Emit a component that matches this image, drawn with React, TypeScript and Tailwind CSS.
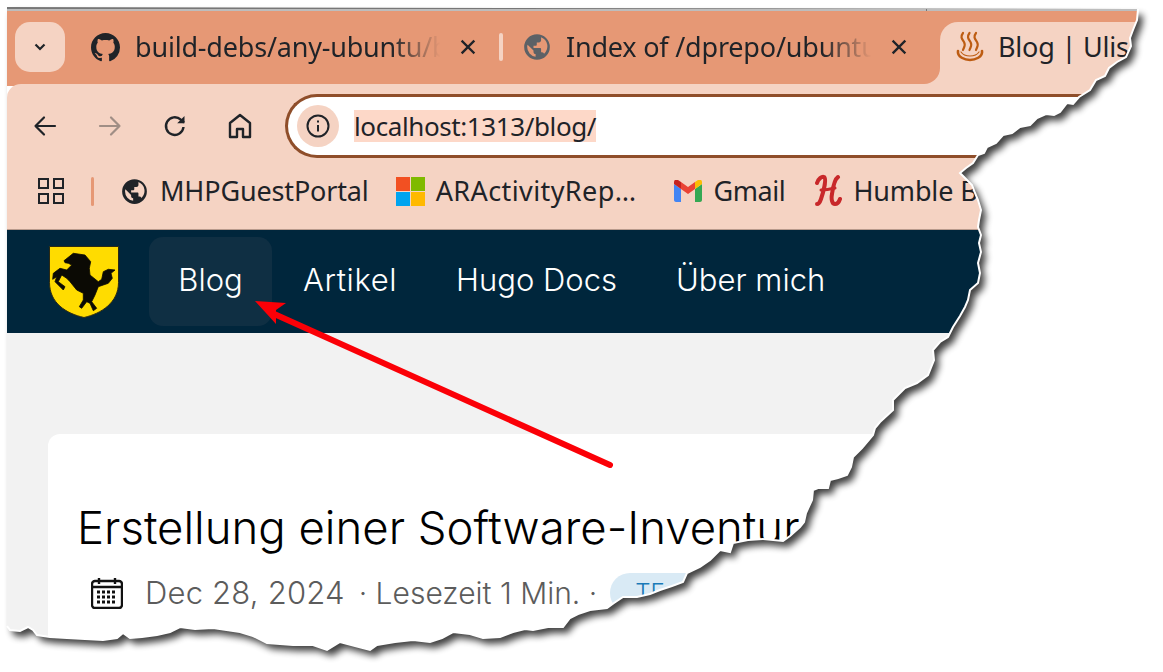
const edge =
  "1138,9 1137,20 1133,30 1130,38 1131,46 1126,57 1117,62 1109,68 1105,76 1096,80 1090,90 1079,97 1073,104 1067,103 1060,112 1054,115 1046,114 1037,118 1030,125 1020,127 1012,133 1003,135 996,143 987,147 984,153 978,155 973,163 966,168 960,173 965,178 972,185 975,193 978,200 981,210 979,220 978,227 981,235 979,243 981,252 978,263 980,273 978,283 970,290 968,300 965,307 960,316 953,327 948,337 940,342 933,350 934,360 928,375 917,383 905,388 900,393 893,400 893,410 880,422 875,428 873,435 862,448 853,457 851,467 847,475 838,478 830,480 828,488 818,488 813,490 812,500 806,513 804,522 800,527 790,536 783,541 763,539 748,540 733,543 730,552 725,551 720,550 710,560 700,567 687,573 683,582 672,586 660,590 650,594 637,597 623,597 614,603 607,608 590,610 578,614 570,618 563,627 548,627 533,630 525,629 513,632 500,637 483,638 470,634 453,632 442,638 430,642 413,640 395,642 377,645 370,650 355,646 340,642 327,650 313,645 293,645 267,643 253,636 240,632 213,628 195,629 180,627 170,632 157,635 142,637 130,638 123,633 117,638 103,640 85,639 67,638 50,637 37,635 33,630 28,627 20,631 10,630 7,626";
const pagePoints = `7,7 ${edge}`;
const outsidePath = `M0,0 H1163 V672 H0 Z M${pagePoints.replace(/ /g, " L")} Z`;

function GithubMark() {
  return (
    <svg viewBox="0 0 16 16" className="h-[29px] w-[29px] shrink-0" fill="#1f2328">
      <path d="M8 0C3.58 0 0 3.58 0 8c0 3.54 2.29 6.53 5.47 7.59.4.07.55-.17.55-.38 0-.19-.01-.82-.01-1.49-2.01.37-2.53-.49-2.69-.94-.09-.23-.48-.94-.82-1.13-.28-.15-.68-.52-.01-.53.63-.01 1.08.58 1.23.82.72 1.21 1.87.87 2.33.66.07-.52.28-.87.51-1.07-1.78-.2-3.64-.89-3.64-3.95 0-.87.31-1.59.82-2.15-.08-.2-.36-1.02.08-2.12 0 0 .67-.21 2.2.82.64-.18 1.32-.27 2-.27s1.36.09 2 .27c1.53-1.04 2.2-.82 2.2-.82.44 1.1.16 1.92.08 2.12.51.56.82 1.27.82 2.15 0 3.07-1.87 3.75-3.65 3.95.29.25.54.73.54 1.48 0 1.07-.01 1.93-.01 2.2 0 .21.15.46.55.38A8.01 8.01 0 0 0 16 8c0-4.42-3.58-8-8-8z" />
    </svg>
  );
}

function Globe({ color, size }: { color: string; size: string }) {
  return (
    <svg viewBox="0 0 24 24" className={size} fill={color}>
      <path d="M12 1a11 11 0 1 0 0 22 11 11 0 0 0 0-22zM3.600 12c0-.7.1-1.400.3-2l5.100 5.100v1.100c0 1 .8 1.800 1.800 1.800v2.300A8.400 8.400 0 0 1 3.600 12zm14.500 5.700a1.900 1.900 0 0 0-1.700-1.200h-.9v-2.800c0-.5-.4-.9-.9-.9H9v-1.900h1.900c.5 0 .9-.4.9-.9V8.100h1.900c1 0 1.800-.8 1.800-1.800V3.600a8.400 8.400 0 0 1 2.600 14.100z" />
    </svg>
  );
}

function CloseIcon() {
  return (
    <svg viewBox="0 0 16 16" className="h-4 w-4 shrink-0" stroke="#1f2328" strokeWidth="2.400" strokeLinecap="square">
      <path d="M2.500 2.500l11 11M13.500 2.500l-11 11" />
    </svg>
  );
}

function SteamIcon() {
  return (
    <svg viewBox="0 0 30 32" className="h-[32px] w-[30px] shrink-0" fill="none" stroke="#bd5c12" strokeWidth="2.200" strokeLinecap="round">
      <path d="M8 2C5 6 7 8 9 11c2 3 0 5-1 8M14.500 2c-3 4-1 6 1 9s0 5-1 8M21 2c-3 4-1 6 1 9s0 5-1 8" />
      <path d="M3 20c-1 6 7 9 12 9s13-3 12-9" strokeWidth="2.600" />
      <path d="M6 21c2 3 5 4 9 4s7-1 9-4" strokeWidth="1.200" />
    </svg>
  );
}

function Shield() {
  return (
    <svg viewBox="0 0 70 72" className="h-[72px] w-[70px] shrink-0">
      <path d="M.5.5h69v36c0 20-17 31-34.500 35C17 67.500.5 57 .5 36.500z" fill="#ffdc00" stroke="#2d2a12" />
      <path
        d="M15 14.700 24.300 7.300 36 9l5.700 6.700-1.400 6.600.7 6.700 8.300 6.700 3.400-2.400 1.600-7.600 5-2.400 6.700.7-4 3.300 1.300 5-4 5-5 1.700-5 1.700L46 49l-3.300 6.700 5 6.600-3.400 2.400-3.300-7.400-3.300-1.600-5 6.600-2.400-1.600 4-6.700v-6.700L27.700 44 21 35.700l-3.300-3.400-5-3.300-3.400 6.700 6.700 5-1.700 3.300L6 35.700l1.700-5-4 2.600.6-6 6.700-5 6.700 1.700 5-5-3.400-1.700-3.300-.6z"
        fill="#0b0a04"
        stroke="#0b0a04"
        strokeWidth="0.800"
        strokeLinejoin="round"
      />
    </svg>
  );
}

function Gmail() {
  return (
    <svg viewBox="0 0 28 22" className="h-[22px] w-[28px] shrink-0">
      <path d="M2 22h5V9L0 4v16c0 1 1 2 2 2z" fill="#4285f4" />
      <path d="M21 22h5c1 0 2-1 2-2V4l-7 5z" fill="#34a853" />
      <path d="M21 2v7l7-5V2c0-2-2-3-4-2z" fill="#fbbc04" />
      <path d="M7 9V2l7 5 7-5v7l-7 5z" fill="#ea4335" />
      <path d="M0 2v2l7 5V2L4 0C2-1 0 0 0 2z" fill="#c5221f" />
    </svg>
  );
}

function HumbleLogo() {
  return (
    <svg viewBox="0 0 28 34" className="h-[34px] w-[28px] shrink-0" fill="none" stroke="#c8282a" strokeWidth="4" strokeLinecap="round">
      <path d="M3 9c1-4 5-7 7-6 3 2-1 16-3 22-1 3-2 5-4 5" />
      <path d="M7 16c5 0 10-1 14-2" strokeWidth="3" />
      <path d="M24 3c-3 2-5 10-6 17-1 5 0 10 3 10 2 0 4-2 5-5" />
    </svg>
  );
}

export default function App() {
  return (
    <div className="relative h-[672px] w-[1163px] overflow-hidden bg-white font-['Noto_Sans',sans-serif]">
      <div className="flex h-full flex-col pl-[7px] pt-[7px]">
        <div className="h-[2px] shrink-0 bg-[#777777]" />
        <div className="h-[2px] shrink-0 bg-[#bdbdbd]">
          <div className="ml-[919px] h-full w-px bg-[#777777]" />
        </div>

        {/* tab strip */}
        <div className="flex h-[75px] shrink-0 items-start bg-[#e69875] pl-2 pt-[11px] text-[27px] leading-[50px] tracking-[-0.2px] text-[#1f2328]">
          <div className="flex h-[50px] w-[50px] shrink-0 items-center justify-center rounded-[15px] bg-[#f5d3c3]">
            <svg viewBox="0 0 16 16" className="h-4 w-4" fill="none" stroke="#1f2328" strokeWidth="2.200">
              <path d="M3.500 5.500 8 10l4.500-4.500" />
            </svg>
          </div>
          <div className="ml-[26px] flex h-[50px] w-[408px] shrink-0 items-center">
            <GithubMark />
            <span className="ml-[15px] w-[305px] shrink-0 overflow-hidden whitespace-nowrap [mask-image:linear-gradient(90deg,#000_84%,transparent)]">
              build-debs/any-ubuntu/b
            </span>
            <span className="ml-5"><CloseIcon /></span>
          </div>
          <div className="mt-[11px] h-[28px] w-1 shrink-0 rounded-sm bg-[#f5d3c3]" />
          <div className="ml-[20px] flex h-[50px] w-[401px] shrink-0 items-center">
            <Globe color="#5c6166" size="h-[28px] w-[28px] shrink-0" />
            <span className="ml-[15px] w-[305px] shrink-0 overflow-hidden whitespace-nowrap [mask-image:linear-gradient(90deg,#000_84%,transparent)]">
              Index of /dprepo/ubuntu
            </span>
            <span className="ml-5"><CloseIcon /></span>
          </div>
          <div className="h-[64px] w-4 shrink-0 bg-[#f5d3c3]">
            <div className="h-[62px] w-4 rounded-br-[16px] bg-[#e69875]" />
          </div>
          <div className="flex h-[64px] flex-1 items-start rounded-tl-[18px] bg-[#f5d3c3] pl-[15px]">
            <div className="flex h-[50px] items-center">
              <SteamIcon />
              <span className="ml-[13px] whitespace-nowrap">Blog | Ulis W</span>
            </div>
          </div>
        </div>

        {/* toolbar */}
        <div className="-mt-[2px] flex h-[83px] shrink-0 items-center rounded-tl-[14px] bg-[#f5d3c3] pl-[26px]">
          <svg viewBox="0 0 24 24" className="h-[24px] w-[24px] shrink-0" fill="none" stroke="#1f2328" strokeWidth="2.200" strokeLinecap="round" strokeLinejoin="round">
            <path d="M22 12H2.500M11 3.500 2.500 12l8.500 8.500" />
          </svg>
          <svg viewBox="0 0 24 24" className="ml-[41px] h-[24px] w-[24px] shrink-0" fill="none" stroke="#a08e85" strokeWidth="2.200" strokeLinecap="round" strokeLinejoin="round">
            <path d="M2 12h19.500M13 3.500l8.500 8.500-8.500 8.500" />
          </svg>
          <svg viewBox="0 0 24 24" className="ml-[41px] h-[24px] w-[24px] shrink-0" fill="none" stroke="#1f2328" strokeWidth="2.400">
            <path d="M20.500 13a8.800 8.800 0 1 1-2.700-7.300L21 8.500" />
            <path d="M21.500 2v7.300h-7.300" fill="#1f2328" stroke="none" />
          </svg>
          <svg viewBox="0 0 24 26" className="ml-[41px] h-[26px] w-[24px] shrink-0" fill="none" stroke="#1f2328" strokeWidth="2.400" strokeLinejoin="round">
            <path d="M2 24V10l10-8 10 8v14h-7v-8H9v8z" />
          </svg>
          <div className="ml-[33px] flex h-[64px] flex-1 items-center rounded-l-[32px] border-y-[3px] border-l-[3px] border-[#8f4e2a] bg-white pl-[9px]">
            <div className="flex h-[42px] w-[42px] shrink-0 items-center justify-center rounded-full bg-[#f5d3c3]">
              <svg viewBox="0 0 24 24" className="h-[24px] w-[24px]" fill="none" stroke="#1f2328" strokeWidth="2">
                <circle cx="12" cy="12" r="10.500" />
                <path d="M12 11v6.500M12 6.500v2" />
              </svg>
            </div>
            <span className="ml-[15px] bg-[#fdd8c8] text-[26px] leading-[32px] tracking-[-0.4px] text-[#1f2328]">localhost:1313/blog/</span>
          </div>
        </div>

        {/* bookmarks */}
        <div className="flex h-[63px] shrink-0 items-center whitespace-nowrap border-b border-[#b89a8c] bg-[#f5d3c3] pb-[14px] pl-[31px] text-[27px] tracking-[-0.15px] text-[#1f2328]">
          <div className="grid h-[26px] w-[26px] shrink-0 grid-cols-2 gap-[4px]">
            <span className="border-[2.500px] border-[#1f2328]" />
            <span className="border-[2.500px] border-[#1f2328]" />
            <span className="border-[2.500px] border-[#1f2328]" />
            <span className="border-[2.500px] border-[#1f2328]" />
          </div>
          <div className="ml-[27px] h-[29px] w-[3px] shrink-0 rounded-sm bg-[#e69875]" />
          <span className="ml-[27px]"><Globe color="#1f2328" size="h-[27px] w-[27px]" /></span>
          <span className="ml-[12px]">MHPGuestPortal</span>
          <div className="ml-[27px] grid h-[29px] w-[29px] shrink-0 grid-cols-2 gap-[1px]">
            <span className="bg-[#f25022]" />
            <span className="bg-[#7fba00]" />
            <span className="bg-[#00a4ef]" />
            <span className="bg-[#ffb900]" />
          </div>
          <span className="ml-[11px] tracking-[0.4px]">ARActivityRep…</span>
          <span className="ml-[38px]"><Gmail /></span>
          <span className="ml-[11px] tracking-[-0.4px]">Gmail</span>
          <span className="ml-[29px]"><HumbleLogo /></span>
          <span className="ml-[11px]">Humble B</span>
        </div>

        {/* site nav */}
        <nav className="flex h-[103px] shrink-0 items-start bg-[#00263c] pl-[42px] pt-4 font-['Inter',sans-serif] text-[31px] font-light leading-[86px] text-white">
          <Shield />
          <span className="-mt-[9px] ml-[30px] h-[89px] w-[123px] rounded-[14px] bg-[#0f2f43] text-center">Blog</span>
          <span className="-mt-[9px] ml-[31px] tracking-[0.6px]">Artikel</span>
          <span className="-mt-[9px] ml-[59px]">Hugo Docs</span>
          <span className="-mt-[9px] ml-[59px]">Über mich</span>
        </nav>

        {/* content */}
        <main className="min-h-0 flex-1 bg-[#f2f2f2] pl-[41px] pt-[101px] font-['Inter',sans-serif]">
          <article className="h-[300px] rounded-tl-[12px] bg-white pl-[29px] pt-[64px]">
            <h1 className="whitespace-nowrap text-[45.500px] font-light leading-[60px] text-black">Erstellung einer Software-Inventur</h1>
            <div className="mt-[15px] flex items-center whitespace-nowrap pl-[14px] text-[30px] font-light leading-[40px] text-[#5c5c5c]">
              <svg viewBox="0 0 32 32" className="h-[32px] w-[32px] shrink-0" fill="none" stroke="#111111" strokeWidth="2.400">
                <path d="M4 4h24a3 3 0 0 1 3 3v21a3 3 0 0 1-3 3H4a3 3 0 0 1-3-3V7a3 3 0 0 1 3-3z" />
                <path d="M1 10h30M8 1v6M24 1v6" />
                <path d="M6 15h20M6 20h20M6 25h20" strokeDasharray="3 2" strokeWidth="3" />
              </svg>
              <span className="ml-[22px] text-[31px] tracking-[0.2px]">Dec 28, 2024</span>
              <span className="ml-[14px]">· Lesezeit 1 Min. ·</span>
              <span className="ml-[13px] rounded-full bg-[#d9eaf5] pl-[25px] pr-[90px] text-[24px] text-[#1a7ab8]">TE</span>
            </div>
          </article>
        </main>
      </div>

      {/* torn paper edge, annotation arrow */}
      <svg viewBox="0 0 1163 672" className="absolute inset-0 h-[672px] w-[1163px]">
        <defs>
          <filter id="blur" x="-5%" y="-5%" width="110%" height="110%">
            <feGaussianBlur stdDeviation="3.500" />
          </filter>
          <clipPath id="outside">
            <path d={outsidePath} clipRule="evenodd" />
          </clipPath>
        </defs>
        <path d={outsidePath} fill="#ffffff" fillRule="evenodd" />
        <g clipPath="url(#outside)">
          <polygon points={pagePoints} transform="translate(5 6)" fill="#000000" opacity="0.75" filter="url(#blur)" />
        </g>
        <polyline points={edge} fill="none" stroke="#ffffff" strokeWidth="2" />
        <path d="M610 465 272 313" stroke="#fb0007" strokeWidth="6" strokeLinecap="round" fill="none" />
        <path d="M255 301 286 303 276 310 276 324z" fill="#fb0007" />
      </svg>
    </div>
  );
}
